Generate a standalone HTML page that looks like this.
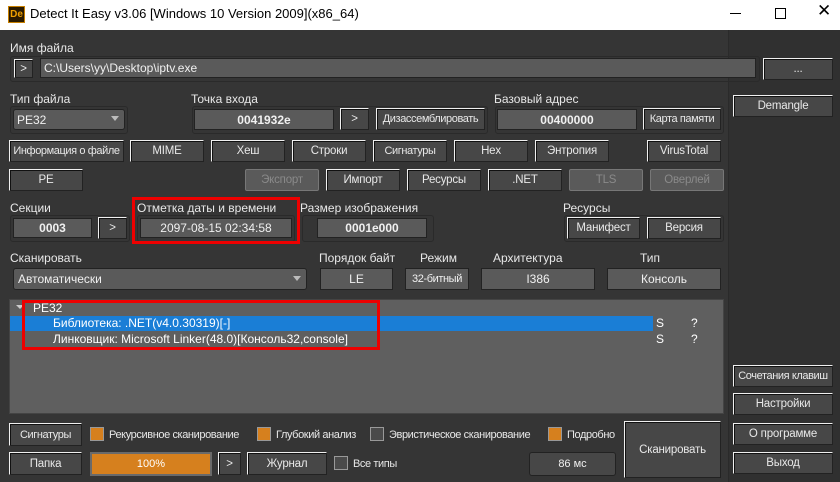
<!DOCTYPE html><html><head><meta charset="utf-8"><style>
*{box-sizing:border-box;margin:0;padding:0}
body{width:840px;height:482px;overflow:hidden;background:#353535;font-family:"Liberation Sans",sans-serif;font-size:12px;color:#e8e8e8;position:relative}
.a{position:absolute}
.t{position:absolute;white-space:nowrap;line-height:14px}
.b{position:absolute;background:#474747;border:1px solid;border-color:#f0f0f0 #222 #222 #f0f0f0;box-shadow:inset 1px 1px 0 #111;display:flex;align-items:center;justify-content:center;white-space:nowrap;font-size:11.5px;letter-spacing:-0.2px;color:#e8e8e8;overflow:hidden}
.d{background:#5a5a5a;border-color:#777;color:#8a8a8a;box-shadow:none;border-radius:2px}
.f{position:absolute;background:#5a5a5a;border:1px solid #222;display:flex;align-items:center;justify-content:center;color:#f0f0f0}
.g{position:absolute;border:1px solid #2a2a2a;border-radius:3px}
.bo{font-weight:bold}
.cb{position:absolute;width:14px;height:14px;border:1px solid #999}
.s{font-size:11px;letter-spacing:-0.4px}
</style></head><body>
<div class="a" style="left:0;top:0;width:840px;height:30px;background:#fff"></div>
<div class="a" style="left:8px;top:6px;width:17px;height:17px;background:#2a1a00;border:1px solid #c88000;color:#f0a000;font-size:10px;font-weight:bold;line-height:15px;text-align:center">De</div>
<div class="t" style="left:30px;top:7px;color:#000;font-size:13px">Detect It Easy v3.06 [Windows 10 Version 2009](x86_64)</div>
<div class="a" style="left:730px;top:13px;width:11px;height:1px;background:#000"></div>
<div class="a" style="left:775px;top:8px;width:11px;height:11px;border:1px solid #000"></div>
<div class="t" style="left:817px;top:4px;color:#000;font-size:17px">✕</div>
<div class="a" style="left:728px;top:30px;width:112px;height:452px;background:#303030;border-left:1px solid #2a2a2a"></div>

<div class="t" style="left:10px;top:41px">Имя файла</div>
<div class="g" style="left:10px;top:56px;width:750px;height:26px"></div>
<div class="b" style="left:14px;top:59px;width:19px;height:19px">&gt;</div>
<div class="f" style="left:40px;top:58px;width:716px;height:20px;justify-content:flex-start;padding-left:3px">C:\Users\yy\Desktop\iptv.exe</div>
<div class="b" style="left:763px;top:58px;width:70px;height:22px">...</div>

<div class="t" style="left:10px;top:92px">Тип файла</div>
<div class="g" style="left:10px;top:106px;width:118px;height:28px"></div>
<div class="f" style="left:13px;top:109px;width:112px;height:21px;justify-content:flex-start;padding-left:3px;border-radius:3px">PE32<span style="position:absolute;right:5px;top:6px;border:4px solid transparent;border-top:5px solid #bbb"></span></div>
<div class="t" style="left:191px;top:92px">Точка входа</div>
<div class="g" style="left:192px;top:106px;width:296px;height:28px"></div>
<div class="f bo" style="left:194px;top:109px;width:140px;height:21px">0041932e</div>
<div class="b" style="left:340px;top:108px;width:29px;height:22px">&gt;</div>
<div class="b s" style="left:376px;top:108px;width:109px;height:22px">Дизассемблировать</div>
<div class="t" style="left:494px;top:92px">Базовый адрес</div>
<div class="g" style="left:495px;top:106px;width:229px;height:28px"></div>
<div class="f bo" style="left:497px;top:109px;width:140px;height:21px">00400000</div>
<div class="b s" style="left:643px;top:108px;width:78px;height:22px">Карта памяти</div>
<div class="b" style="left:733px;top:95px;width:100px;height:22px">Demangle</div>

<div class="b s" style="left:9px;top:140px;width:115px;height:22px">Информация о файле</div>
<div class="b" style="left:130px;top:140px;width:74px;height:22px">MIME</div>
<div class="b" style="left:211px;top:140px;width:74px;height:22px">Хеш</div>
<div class="b" style="left:292px;top:140px;width:74px;height:22px">Строки</div>
<div class="b s" style="left:373px;top:140px;width:74px;height:22px">Сигнатуры</div>
<div class="b" style="left:454px;top:140px;width:74px;height:22px">Hex</div>
<div class="b" style="left:535px;top:140px;width:74px;height:22px">Энтропия</div>
<div class="b" style="left:647px;top:140px;width:74px;height:22px">VirusTotal</div>

<div class="b" style="left:9px;top:169px;width:74px;height:22px">PE</div>
<div class="b d" style="left:245px;top:169px;width:74px;height:22px">Экспорт</div>
<div class="b" style="left:326px;top:169px;width:74px;height:22px">Импорт</div>
<div class="b" style="left:407px;top:169px;width:74px;height:22px">Ресурсы</div>
<div class="b" style="left:488px;top:169px;width:74px;height:22px">.NET</div>
<div class="b d" style="left:569px;top:169px;width:74px;height:22px">TLS</div>
<div class="b d" style="left:650px;top:169px;width:74px;height:22px">Оверлей</div>

<div class="t" style="left:10px;top:201px">Секции</div>
<div class="g" style="left:10px;top:215px;width:120px;height:27px"></div>
<div class="f bo" style="left:13px;top:218px;width:79px;height:20px">0003</div>
<div class="b" style="left:98px;top:217px;width:29px;height:22px">&gt;</div>
<div class="t" style="left:137px;top:201px">Отметка даты и времени</div>
<div class="g" style="left:137px;top:215px;width:158px;height:27px"></div>
<div class="f" style="left:140px;top:218px;width:152px;height:20px">2097-08-15 02:34:58</div>
<div class="a" style="left:132px;top:197px;width:168px;height:47px;border:3px solid #e00"></div>
<div class="t" style="left:300px;top:201px">Размер изображения</div>
<div class="g" style="left:302px;top:215px;width:132px;height:27px"></div>
<div class="f bo" style="left:317px;top:218px;width:110px;height:20px">0001e000</div>
<div class="t" style="left:563px;top:201px">Ресурсы</div>
<div class="g" style="left:564px;top:215px;width:160px;height:27px"></div>
<div class="b" style="left:567px;top:217px;width:73px;height:22px">Манифест</div>
<div class="b" style="left:647px;top:217px;width:74px;height:22px">Версия</div>

<div class="t" style="left:10px;top:251px">Сканировать</div>
<div class="f" style="left:13px;top:268px;width:294px;height:22px;justify-content:flex-start;padding-left:4px;border-radius:3px">Автоматически<span style="position:absolute;right:5px;top:7px;border:4px solid transparent;border-top:5px solid #bbb"></span></div>
<div class="t" style="left:319px;top:251px">Порядок байт</div>
<div class="f" style="left:320px;top:268px;width:73px;height:22px">LE</div>
<div class="t" style="left:420px;top:251px">Режим</div>
<div class="f s" style="left:405px;top:268px;width:64px;height:22px">32-битный</div>
<div class="t" style="left:493px;top:251px">Архитектура</div>
<div class="f" style="left:481px;top:268px;width:114px;height:22px">I386</div>
<div class="t" style="left:640px;top:251px">Тип</div>
<div class="f" style="left:607px;top:268px;width:114px;height:22px">Консоль</div>

<div class="a" style="left:9px;top:299px;width:715px;height:115px;background:#5f5f5f;border:1px solid #444"></div>
<div class="a" style="left:16px;top:305px;border:4px solid transparent;border-top:4px solid #ccc"></div>
<div class="t" style="left:33px;top:301px;color:#fff">PE32</div>
<div class="a" style="left:10px;top:316px;width:643px;height:15px;background:#1a7ed6"></div>
<div class="t" style="left:53px;top:316px;color:#fff">Библиотека: .NET(v4.0.30319)[-]</div>
<div class="t" style="left:53px;top:332px;color:#fff">Линковщик: Microsoft Linker(48.0)[Консоль32,console]</div>
<div class="t" style="left:656px;top:316px;color:#fff">S</div><div class="t" style="left:691px;top:316px;color:#fff">?</div>
<div class="t" style="left:656px;top:332px;color:#fff">S</div><div class="t" style="left:691px;top:332px;color:#fff">?</div>
<div class="a" style="left:22px;top:300px;width:358px;height:50px;border:3px solid #e00"></div>

<div class="b s" style="left:733px;top:365px;width:100px;height:22px">Сочетания клавиш</div>
<div class="b" style="left:733px;top:393px;width:100px;height:22px">Настройки</div>
<div class="b" style="left:733px;top:423px;width:100px;height:22px">О программе</div>
<div class="b" style="left:733px;top:452px;width:100px;height:22px">Выход</div>

<div class="b s" style="left:9px;top:423px;width:73px;height:23px">Сигнатуры</div>
<div class="cb" style="left:90px;top:427px;background:#d6801e"></div>
<div class="t s" style="left:109px;top:428px">Рекурсивное сканирование</div>
<div class="cb" style="left:257px;top:427px;background:#d6801e"></div>
<div class="t s" style="left:276px;top:428px">Глубокий анализ</div>
<div class="cb" style="left:370px;top:427px;background:#4a4a4a"></div>
<div class="t s" style="left:389px;top:428px">Эвристическое сканирование</div>
<div class="cb" style="left:548px;top:427px;background:#d6801e"></div>
<div class="t s" style="left:567px;top:428px">Подробно</div>
<div class="b" style="left:624px;top:421px;width:97px;height:57px">Сканировать</div>
<div class="b" style="left:9px;top:452px;width:73px;height:23px">Папка</div>
<div class="a" style="left:90px;top:452px;width:122px;height:24px;background:#d6801e;border:2px solid #6a6a6a;display:flex;align-items:center;justify-content:center;color:#fff;font-size:11px">100%</div>
<div class="b" style="left:218px;top:452px;width:23px;height:23px">&gt;</div>
<div class="b" style="left:247px;top:452px;width:80px;height:23px">Журнал</div>
<div class="cb" style="left:334px;top:456px;background:#4a4a4a"></div>
<div class="t s" style="left:353px;top:457px">Все типы</div>
<div class="f" style="left:529px;top:452px;width:87px;height:24px;border-radius:3px;background:#474747;font-size:11px">86 мс</div>
</body></html>
